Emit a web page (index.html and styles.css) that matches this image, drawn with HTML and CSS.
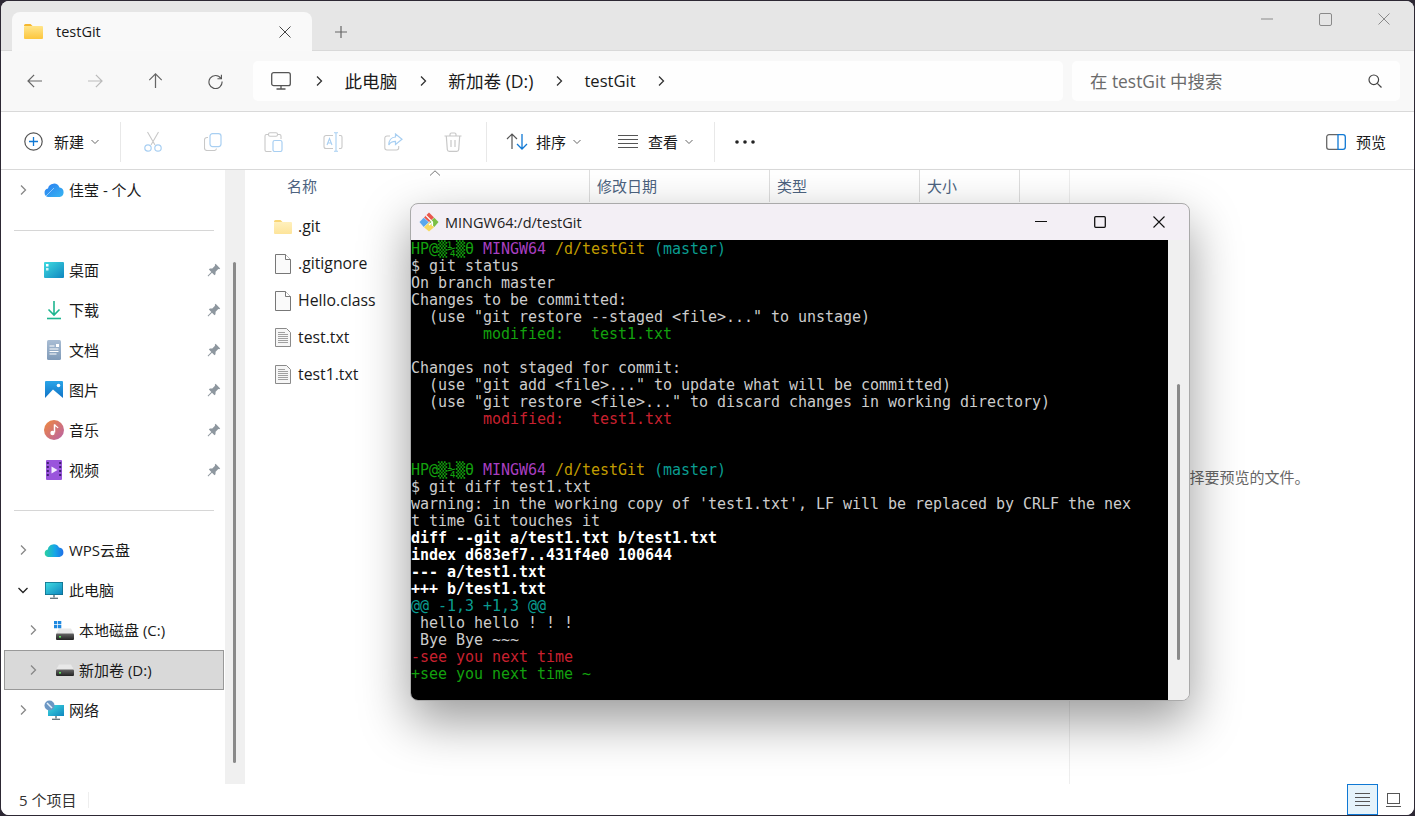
FILE: index.html
```html
<!DOCTYPE html>
<html lang="zh-CN">
<head>
    <meta charset="UTF-8">
    <meta name="viewport" content="width=device-width, initial-scale=1.0">
    <title>testGit</title>
    <link rel="stylesheet" href="styles.css">
</head>
<body>
    <!-- Shared icons -->
    <svg class="sprite" aria-hidden="true">
        <defs>
            <linearGradient id="gFolder" x1="0" y1="0" x2="0" y2="1"><stop offset="0" stop-color="#ffe58a"/><stop offset="1" stop-color="#fcc63d"/></linearGradient>
            <linearGradient id="gFolderPale" x1="0" y1="0" x2="0" y2="1"><stop offset="0" stop-color="#fff0bd"/><stop offset="1" stop-color="#fde49a"/></linearGradient>
            <linearGradient id="gCloud" x1="0" y1="0" x2="1" y2="1"><stop offset="0" stop-color="#2a7df0"/><stop offset="1" stop-color="#38b6f2"/></linearGradient>
            <linearGradient id="gWps" x1="0" y1="0" x2="1" y2="0"><stop offset="0" stop-color="#2ad0a0"/><stop offset="0.55" stop-color="#16a6e8"/><stop offset="1" stop-color="#1f6fe8"/></linearGradient>
            <linearGradient id="gScreen" x1="0" y1="0" x2="1" y2="1"><stop offset="0" stop-color="#3fdbe0"/><stop offset="1" stop-color="#0f86c0"/></linearGradient>
            <linearGradient id="gDoc" x1="0" y1="0" x2="0" y2="1"><stop offset="0" stop-color="#a9bdd4"/><stop offset="1" stop-color="#7f9ab8"/></linearGradient>
            <linearGradient id="gPic" x1="0" y1="0" x2="0" y2="1"><stop offset="0" stop-color="#2aa5e8"/><stop offset="1" stop-color="#0f70c4"/></linearGradient>
            <linearGradient id="gMusic" x1="0" y1="0" x2="1" y2="1"><stop offset="0" stop-color="#f08a3c"/><stop offset="1" stop-color="#b860a8"/></linearGradient>
            <linearGradient id="gDrive" x1="0" y1="0" x2="0" y2="1"><stop offset="0" stop-color="#666"/><stop offset="1" stop-color="#222"/></linearGradient>

            <symbol id="i-chev" viewBox="0 0 12 12"><path d="M4 1.500 8.500 6 4 10.500" fill="none" stroke="currentColor" stroke-width="1.300"/></symbol>
            <symbol id="i-down" viewBox="0 0 12 12"><path d="M2.500 4 6 7.500 9.500 4" fill="none" stroke="currentColor" stroke-width="1"/></symbol>
            <symbol id="i-pin" viewBox="0 0 14 14"><path d="M8.600.8 13.200 5.400l-1 .9-.9-.2-2.700 2.700-.1 2.400-1 1-2.500-2.500L1.200 13.400l-.6-.6 3.700-3.800L1.900 6.500l1-1 2.400-.1L8 2.700l-.2-.9z" fill="#8e979f"/></symbol>
            <symbol id="i-file" viewBox="0 0 18 20"><path d="M1.500.5h10l5 5v14h-15z" fill="#fafafa" stroke="#777"/><path d="M11.500.5v5h5" fill="#fff" stroke="#777"/></symbol>
            <symbol id="i-txt" viewBox="0 0 16 19"><path d="M.5.5h11l4 4v14H.500z" fill="#f6f6f6" stroke="#8a8a8a"/><path d="M3 4.500h7M3 6.500h10M3 8.500h10M3 10.500h10M3 12.500h10M3 14.500h10" stroke="#a0a0a0"/></symbol>
            <symbol id="i-drive" viewBox="0 0 18 12"><path d="M3 .5h12l3 5.500H0z" fill="#e8e8e8"/><rect y="5.500" width="18" height="6.500" rx="1" fill="url(#gDrive)"/><rect x="3" y="8" width="2" height="1.600" fill="#5de05d"/></symbol>
        </defs>
    </svg>

    <div class="explorer">
        <!-- Tabs -->
        <div class="tabbar">
            <div class="tab">
                <svg class="tab-folder" width="19" height="15" viewBox="0 0 19 15"><path d="M0 1.500A1.500 1.500 0 0 1 1.500 0h5l2 2H0z" fill="#f5b72f"/><rect y="2" width="19" height="13" rx="1" fill="url(#gFolder)"/></svg>
                <span class="tab-title">testGit</span>
                <svg class="tab-close" width="12" height="12" viewBox="0 0 12 12"><path d="M.5.5l11 11M11.500.5l-11 11" stroke="#444" fill="none"/></svg>
            </div>
            <svg class="tab-add" width="12" height="12" viewBox="0 0 12 12"><path d="M6 0v12M0 6h12" stroke="#666" stroke-width="1.200"/></svg>
            <div class="win-controls">
                <svg width="12" height="12" viewBox="0 0 12 12"><path d="M0 6h12" stroke="#8a8a8a"/></svg>
                <svg width="13" height="13" viewBox="0 0 13 13"><rect x=".5" y=".5" width="12" height="12" rx="1.500" fill="none" stroke="#8a8a8a"/></svg>
                <svg width="12" height="12" viewBox="0 0 12 12"><path d="M.5.5l11 11M11.500.5l-11 11" stroke="#8a8a8a" fill="none"/></svg>
            </div>
        </div>

        <!-- Address row -->
        <div class="navbar">
            <button class="nav-btn"><svg width="16" height="14" viewBox="0 0 18 16"><path d="M8 1 1 8l7 7M1 8h16" fill="none" stroke="#666" stroke-width="1.400"/></svg></button>
            <button class="nav-btn"><svg width="16" height="14" viewBox="0 0 18 16"><path d="M10 1l7 7-7 7M17 8H1" fill="none" stroke="#bbb" stroke-width="1.400"/></svg></button>
            <button class="nav-btn"><svg width="15" height="16" viewBox="0 0 16 18"><path d="M1 8l7-7 7 7M8 1v16" fill="none" stroke="#666" stroke-width="1.400"/></svg></button>
            <button class="nav-btn"><svg width="15" height="15" viewBox="0 0 16 16"><path d="M13.800 4.600A7 7 0 1 0 15 8" fill="none" stroke="#555" stroke-width="1.200"/><path d="M14.300.8v4.200h-4.200" fill="none" stroke="#555" stroke-width="1.200"/></svg></button>
            <div class="address">
                <svg class="addr-pc" width="20" height="18" viewBox="0 0 20 18"><rect x=".7" y=".7" width="18.600" height="13" rx="2" fill="none" stroke="#555" stroke-width="1.300"/><path d="M10 14v3M5.500 17h9" stroke="#555" stroke-width="1.300"/></svg>
                <svg class="crumb-chev" width="12" height="12"><use href="#i-chev"/></svg>
                <span class="crumb">此电脑</span>
                <svg class="crumb-chev" width="12" height="12"><use href="#i-chev"/></svg>
                <span class="crumb">新加卷 (D:)</span>
                <svg class="crumb-chev" width="12" height="12"><use href="#i-chev"/></svg>
                <span class="crumb crumb-last">testGit</span>
                <svg class="crumb-chev" width="12" height="12"><use href="#i-chev"/></svg>
            </div>
            <div class="search">
                <span class="search-text">在 testGit 中搜索</span>
                <svg width="14" height="14" viewBox="0 0 14 14"><circle cx="5.800" cy="5.800" r="4.800" fill="none" stroke="#444" stroke-width="1.200"/><path d="M9.300 9.300 13.500 13.500" stroke="#444" stroke-width="1.200"/></svg>
            </div>
        </div>

        <!-- Command bar -->
        <div class="toolbar">
            <div class="tool tool-new">
                <svg width="19" height="19" viewBox="0 0 19 19"><circle cx="9.500" cy="9.500" r="8.700" fill="none" stroke="#555" stroke-width="1.200"/><path d="M9.500 5v9M5 9.500h9" stroke="#0f78d4" stroke-width="1.300"/></svg>
                <span class="tool-label">新建</span>
                <svg class="tool-chev" width="12" height="12"><use href="#i-down"/></svg>
            </div>
            <div class="tool-sep"></div>
            <div class="tool-group">
                <div class="tool-icon"><svg width="18" height="21" viewBox="0 0 18 21"><path d="M3.500 1l7.500 13M14.500 1L7 14" stroke="#c8c8c8" fill="none" stroke-width="1.100"/><circle cx="4" cy="17" r="3.200" fill="none" stroke="#a8cff2" stroke-width="1.200"/><circle cx="14" cy="17" r="3.200" fill="none" stroke="#a8cff2" stroke-width="1.200"/></svg></div>
                <div class="tool-icon"><svg width="18" height="18" viewBox="0 0 18 18"><path d="M4 4.500H3a2.500 2.500 0 0 0-2.500 2.500v8A2.500 2.500 0 0 0 3 17.500h7a2.500 2.500 0 0 0 2.500-2" fill="none" stroke="#c8c8c8" stroke-width="1.100"/><rect x="6" y=".6" width="11" height="13" rx="2.500" fill="none" stroke="#a8cff2" stroke-width="1.200"/></svg></div>
                <div class="tool-icon"><svg width="19" height="20" viewBox="0 0 19 20"><path d="M4 2.500H2.500A1.500 1.500 0 0 0 1 4v14a1.500 1.500 0 0 0 1.500 1.500h5M14 2.500h1.500A1.500 1.500 0 0 1 17 4v3" fill="none" stroke="#c8c8c8" stroke-width="1.100"/><rect x="4.500" y=".8" width="9" height="3.500" rx="1.500" fill="none" stroke="#c8c8c8" stroke-width="1.100"/><rect x="9" y="8.500" width="9" height="11" rx="1.800" fill="none" stroke="#a8cff2" stroke-width="1.200"/></svg></div>
                <div class="tool-icon"><svg width="20" height="20" viewBox="0 0 20 20"><path d="M10 3.500H3A2 2 0 0 0 1 5.500v9a2 2 0 0 0 2 2h7M16 3.500h1.500a1.500 1.500 0 0 1 1.500 1.500v10a1.500 1.500 0 0 1-1.500 1.500H16" fill="none" stroke="#c8c8c8" stroke-width="1.100"/><path d="M11 .7h4M11 19.300h4M13 .7v18.600M4 13l2.500-6.500L9 13M5 11h3" fill="none" stroke="#a8cff2" stroke-width="1.100"/></svg></div>
                <div class="tool-icon"><svg width="19" height="18" viewBox="0 0 19 18"><path d="M6 3H3A2.200 2.200 0 0 0 .8 5.200v9.600A2.200 2.200 0 0 0 3 17h9.500a2.200 2.200 0 0 0 2.200-2.200V13" fill="none" stroke="#c8c8c8" stroke-width="1.100"/><path d="M11.500 1l6.500 5.200-6.500 5.300V8.400C8 8.400 6 9.700 4.800 12c0-4.500 2.500-7.800 6.700-8z" fill="none" stroke="#a8cff2" stroke-width="1.200"/></svg></div>
                <div class="tool-icon"><svg width="18" height="20" viewBox="0 0 18 20"><path d="M.5 4h17M6 3.800V2.500A1.500 1.500 0 0 1 7.500 1h3A1.500 1.500 0 0 1 12 2.500v1.300M2.300 4l1 13.500A2 2 0 0 0 5.300 19.300h7.400a2 2 0 0 0 2-1.800l1-13.500M7 8v7M11 8v7" fill="none" stroke="#c8c8c8" stroke-width="1.200"/></svg></div>
            </div>
            <div class="tool-sep"></div>
            <div class="tool tool-sort">
                <svg width="22" height="17" viewBox="0 0 22 17"><path d="M1 6l5-5 5 5M6 1v15" fill="none" stroke="#555" stroke-width="1.200"/><path d="M11 11l5 5 5-5M16 16V1" fill="none" stroke="#0f78d4" stroke-width="1.300"/></svg>
                <span class="tool-label">排序</span>
                <svg class="tool-chev" width="12" height="12"><use href="#i-down"/></svg>
            </div>
            <div class="tool tool-view">
                <svg width="20" height="14" viewBox="0 0 20 14"><path d="M0 .5h20M0 4.500h20M0 8.500h20M0 12.500h20" stroke="#555"/></svg>
                <span class="tool-label">查看</span>
                <svg class="tool-chev" width="12" height="12"><use href="#i-down"/></svg>
            </div>
            <div class="tool-sep"></div>
            <svg class="tool-more" width="20" height="4" viewBox="0 0 20 4"><circle cx="2" cy="2" r="1.800" fill="#222"/><circle cx="10" cy="2" r="1.800" fill="#222"/><circle cx="18" cy="2" r="1.800" fill="#222"/></svg>
            <div class="tool tool-preview">
                <svg width="20" height="16" viewBox="0 0 20 16"><path d="M12 .7H3A2.300 2.300 0 0 0 .7 3v10A2.300 2.300 0 0 0 3 15.300h9" fill="none" stroke="#666" stroke-width="1.300"/><path d="M12 .7h5A2.300 2.300 0 0 1 19.300 3v10a2.300 2.300 0 0 1-2.300 2.300h-5zM12 .7v14.600" fill="none" stroke="#0f78d4" stroke-width="1.300"/></svg>
                <span class="tool-label">预览</span>
            </div>
        </div>

        <!-- Main area -->
        <div class="main">
            <nav class="sidebar">
                <div class="nav-row">
                    <svg class="nav-chev" width="12" height="12"><use href="#i-chev"/></svg>
                    <svg class="nav-icon" width="20" height="14" viewBox="0 0 20 14"><path d="M4.500 14A4.300 4.300 0 0 1 4 5.500 6 6 0 0 1 15.500 4.500 4.800 4.800 0 0 1 15.500 14z" fill="url(#gCloud)"/><path d="M2 13 10 5" stroke="#8fc8ff" stroke-width="1"/></svg>
                    <span class="nav-label">佳莹 - 个人</span>
                </div>
                <div class="nav-divider"></div>
                <div class="nav-row">
                    <span class="nav-chev"></span>
                    <svg class="nav-icon" width="20" height="16" viewBox="0 0 20 16"><rect width="20" height="16" rx="1" fill="url(#gScreen)"/><rect x="2" y="2" width="2.500" height="2.500" fill="#fff"/><rect x="2" y="6" width="2.500" height="2.500" fill="#cff5f8"/></svg>
                    <span class="nav-label">桌面</span>
                    <svg class="nav-pin" width="14" height="14"><use href="#i-pin"/></svg>
                </div>
                <div class="nav-row">
                    <span class="nav-chev"></span>
                    <svg class="nav-icon" width="20" height="20" viewBox="0 0 20 20"><path d="M10 1v14M4.500 9.500 10 15l5.500-5.500" fill="none" stroke="#1eb58f" stroke-width="1.600"/><path d="M3 18.500h14" stroke="#1eb58f" stroke-width="1.600"/></svg>
                    <span class="nav-label">下载</span>
                    <svg class="nav-pin" width="14" height="14"><use href="#i-pin"/></svg>
                </div>
                <div class="nav-row">
                    <span class="nav-chev"></span>
                    <svg class="nav-icon" width="20" height="20" viewBox="0 0 20 20"><rect x="3" width="14" height="20" rx="1.500" fill="url(#gDoc)"/><path d="M5.500 6h5M5.500 9h9M5.500 11.500h9M5.500 14h7" stroke="#fff"/><rect x="12" y="4" width="3" height="3" fill="#fff"/></svg>
                    <span class="nav-label">文档</span>
                    <svg class="nav-pin" width="14" height="14"><use href="#i-pin"/></svg>
                </div>
                <div class="nav-row">
                    <span class="nav-chev"></span>
                    <svg class="nav-icon" width="20" height="18" viewBox="0 0 20 18"><rect x="1" width="18" height="18" rx="1" fill="url(#gPic)"/><circle cx="14.500" cy="4.500" r="1.800" fill="#fff"/><path d="M1 17 9 8.500 19 17v1H1z" fill="#fff"/></svg>
                    <span class="nav-label">图片</span>
                    <svg class="nav-pin" width="14" height="14"><use href="#i-pin"/></svg>
                </div>
                <div class="nav-row">
                    <span class="nav-chev"></span>
                    <svg class="nav-icon" width="20" height="20" viewBox="0 0 20 20"><circle cx="10" cy="10" r="10" fill="url(#gMusic)"/><path d="M10.500 4.500v8" stroke="#fff" stroke-width="1.500"/><path d="M10.500 4.500c.5 2 3 2 3.500 3.500" fill="none" stroke="#fff" stroke-width="1.300"/><circle cx="8.500" cy="13" r="2.200" fill="#fff"/></svg>
                    <span class="nav-label">音乐</span>
                    <svg class="nav-pin" width="14" height="14"><use href="#i-pin"/></svg>
                </div>
                <div class="nav-row">
                    <span class="nav-chev"></span>
                    <svg class="nav-icon" width="20" height="20" viewBox="0 0 20 20"><rect x="2" width="16" height="20" rx="1" fill="#9a55dc"/><path d="M3.800 2v16M16.200 2v16" stroke="#3d2070" stroke-width="2" stroke-dasharray="2 2"/><path d="M7.500 6.500v7l6-3.500z" fill="#f4ecff"/></svg>
                    <span class="nav-label">视频</span>
                    <svg class="nav-pin" width="14" height="14"><use href="#i-pin"/></svg>
                </div>
                <div class="nav-divider"></div>
                <div class="nav-row">
                    <svg class="nav-chev" width="12" height="12"><use href="#i-chev"/></svg>
                    <svg class="nav-icon" width="20" height="14" viewBox="0 0 20 14"><path d="M4 14A3.800 3.800 0 0 1 3.800 6.500 6 6 0 0 1 15 4.500 4.800 4.800 0 0 1 15.500 14z" fill="url(#gWps)"/></svg>
                    <span class="nav-label">WPS云盘</span>
                </div>
                <div class="nav-row">
                    <svg class="nav-chev nav-chev-open" width="12" height="12" viewBox="0 0 12 12"><path d="M1.500 4 6 8.500 10.500 4" fill="none" stroke="#222" stroke-width="1.300"/></svg>
                    <svg class="nav-icon" width="20" height="17" viewBox="0 0 20 17"><rect x="1" width="18" height="13" fill="#0f6f8c"/><rect x="1.800" y=".8" width="16.400" height="11.400" fill="url(#gScreen)"/><path d="M10 13v2.500" stroke="#8a9aa0" stroke-width="2"/><path d="M6 16.300h8" stroke="#607078" stroke-width="1.300"/></svg>
                    <span class="nav-label">此电脑</span>
                </div>
                <div class="nav-row nav-row-sub">
                    <svg class="nav-chev" width="12" height="12"><use href="#i-chev"/></svg>
                    <svg class="nav-icon" width="20" height="19" viewBox="0 0 20 19"><svg x="2" y="7" width="18" height="12" viewBox="0 0 18 12"><use href="#i-drive"/></svg><path d="M0 0h3.300v3.300H0zM4 0h3.300v3.300H4zM0 4h3.300v3.300H0zM4 4h3.300v3.300H4z" fill="#1e88e0"/></svg>
                    <span class="nav-label">本地磁盘 (C:)</span>
                </div>
                <div class="nav-row nav-row-sub nav-row-active">
                    <svg class="nav-chev" width="12" height="12"><use href="#i-chev"/></svg>
                    <svg class="nav-icon" width="20" height="12" viewBox="0 0 20 12"><svg x="2" width="18" height="12" viewBox="0 0 18 12"><use href="#i-drive"/></svg></svg>
                    <span class="nav-label">新加卷 (D:)</span>
                </div>
                <div class="nav-row">
                    <svg class="nav-chev" width="12" height="12"><use href="#i-chev"/></svg>
                    <svg class="nav-icon" width="20" height="20" viewBox="0 0 20 20"><rect x="4" y="5" width="16" height="11" fill="url(#gScreen)"/><path d="M12 16v2.500" stroke="#8a9aa0" stroke-width="2"/><path d="M8 19.300h8" stroke="#607078" stroke-width="1.300"/><circle cx="5.500" cy="5.500" r="5" fill="#6b97c4"/><path d="M3 3l5 5" stroke="#e6f0fa" stroke-width="1.500"/></svg>
                    <span class="nav-label">网络</span>
                </div>
            </nav>
            <div class="side-scroll"><div class="side-thumb"></div></div>

            <section class="files">
                <div class="file-head">
                    <div class="col col-name">名称<svg class="sort-mark" width="12" height="6" viewBox="0 0 12 6"><path d="M1 5.500 6 .8l5 4.700" fill="none" stroke="#777"/></svg></div>
                    <div class="col col-date">修改日期</div>
                    <div class="col col-type">类型</div>
                    <div class="col col-size">大小</div>
                </div>
                <div class="file-row">
                    <svg class="file-icon" width="18" height="14" viewBox="0 0 18 14"><path d="M0 1.500A1.500 1.500 0 0 1 1.500 0h5l2 2H0z" fill="#f9d675"/><rect y="2" width="18" height="12" rx="1" fill="url(#gFolderPale)"/></svg>
                    <span>.git</span>
                </div>
                <div class="file-row">
                    <svg class="file-icon" width="18" height="20"><use href="#i-file"/></svg>
                    <span>.gitignore</span>
                </div>
                <div class="file-row">
                    <svg class="file-icon" width="18" height="20"><use href="#i-file"/></svg>
                    <span>Hello.class</span>
                </div>
                <div class="file-row">
                    <svg class="file-icon" width="18" height="19"><use href="#i-txt"/></svg>
                    <span>test.txt</span>
                </div>
                <div class="file-row">
                    <svg class="file-icon" width="18" height="19"><use href="#i-txt"/></svg>
                    <span>test1.txt</span>
                </div>
            </section>

            <aside class="preview">选择要预览的文件。</aside>
        </div>

        <!-- Status bar -->
        <div class="statusbar">
            <span class="status-count">5 个项目</span>
            <div class="status-sep"></div>
            <div class="view-btn view-btn-on"><svg width="15" height="14" viewBox="0 0 15 14"><path d="M0 .5h15M0 4.500h15M0 8.500h15M0 12.500h15" stroke="#555"/></svg></div>
            <div class="view-btn"><svg width="15" height="14" viewBox="0 0 15 14"><rect x="1.500" y=".5" width="12" height="10" fill="none" stroke="#555"/><path d="M0 13.500h15" stroke="#555"/></svg></div>
        </div>
    </div>

    <!-- Git Bash window, floating over the explorer -->
    <div class="terminal">
        <div class="term-title">
            <svg class="term-logo" width="20" height="20" viewBox="0 0 20 20">
                <path d="M10 .5 15 5.500 10 10 5 5.500z" fill="#e8574c"/>
                <path d="M4.700 5.800 9.700 10.300 4.700 15 .5 10z" fill="#5aa8ee"/>
                <path d="M15.300 5.800 19.500 10 15.300 15 10.300 10.300z" fill="#7bc043"/>
                <path d="M10 10.600 15 15.300 10 19.500 5 15.300z" fill="#f6d95e"/>
                <path d="M7 3.500 13.500 10v4M13.500 10 10 13" stroke="#fff" stroke-width="1.200" fill="none"/>
            </svg>
            <span class="term-name">MINGW64:/d/testGit</span>
            <div class="term-controls">
                <svg width="12" height="12" viewBox="0 0 12 12"><path d="M0 5.500h12" stroke="#111"/></svg>
                <svg width="12" height="12" viewBox="0 0 12 12"><rect x=".7" y=".7" width="10.600" height="10.600" rx="1" fill="none" stroke="#111" stroke-width="1.300"/></svg>
                <svg width="12" height="12" viewBox="0 0 12 12"><path d="M.5.500l11 11M11.500.500l-11 11" stroke="#111" stroke-width="1.100" fill="none"/></svg>
            </div>
        </div>
        <div class="term-body">
<pre class="term-text"><span class="c-green">HP@▒¼▒θ</span> <span class="c-purple">MINGW64</span> <span class="c-yellow">/d/testGit</span> <span class="c-teal">(master)</span>
$ git status
On branch master
Changes to be committed:
  (use "git restore --staged &lt;file&gt;..." to unstage)
<span class="c-green">        modified:   test1.txt</span>

Changes not staged for commit:
  (use "git add &lt;file&gt;..." to update what will be committed)
  (use "git restore &lt;file&gt;..." to discard changes in working directory)
<span class="c-red">        modified:   test1.txt</span>


<span class="c-green">HP@▒¼▒θ</span> <span class="c-purple">MINGW64</span> <span class="c-yellow">/d/testGit</span> <span class="c-teal">(master)</span>
$ git diff test1.txt
warning: in the working copy of 'test1.txt', LF will be replaced by CRLF the nex
t time Git touches it
<b>diff --git a/test1.txt b/test1.txt</b>
<b>index d683ef7..431f4e0 100644</b>
<b>--- a/test1.txt</b>
<b>+++ b/test1.txt</b>
<span class="c-teal">@@ -1,3 +1,3 @@</span>
 hello hello ! ! !
 Bye Bye ~~~
<span class="c-red">-see you next time</span>
<span class="c-green">+see you next time ~</span></pre>
            <div class="term-scroll"><div class="term-thumb"></div></div>
        </div>
    </div>
</body>
</html>
```

FILE: styles.css
```css
* {
    margin: 0;
    padding: 0;
    box-sizing: border-box;
}

body {
    position: relative;
    width: 1415px;
    height: 816px;
    background: #2d2834;
    font-family: "Open Sans", "Noto Sans CJK SC", sans-serif;
    font-size: 15px;
    color: #1a1a1a;
    overflow: hidden;
}

svg {
    display: block;
    flex: none;
}

.sprite {
    width: 0;
    height: 0;
}

.explorer {
    display: flex;
    flex-direction: column;
    width: 1413px;
    height: 814px;
    margin: 1px;
    background: #fff;
    border-radius: 8px;
    overflow: hidden;
}

/* Tab row */
.tabbar {
    display: flex;
    align-items: flex-start;
    height: 50px;
    padding: 11px 0 0 11px;
    background: #e6e6e6;
    border-bottom: 1px solid #d9d9d9;
    flex: none;
}

.tab {
    display: flex;
    align-items: center;
    width: 300px;
    height: 39px;
    padding: 0 21px 0 12px;
    background: #f9f9f9;
    border-radius: 8px 8px 0 0;
}

.tab-title {
    margin-left: 13px;
    font-size: 14.5px;
}

.tab-close {
    margin-left: auto;
}

.tab-add {
    margin: 14px 0 0 23px;
}

.win-controls {
    display: flex;
    gap: 46px;
    margin: 1px 24px 0 auto;
}

/* Address row */
.navbar {
    display: flex;
    align-items: center;
    height: 61px;
    padding-left: 4px;
    background: #f8f8f8;
    border-bottom: 1px solid #d9d9d9;
    flex: none;
}

.nav-btn {
    display: flex;
    align-items: center;
    justify-content: center;
    width: 60px;
    height: 40px;
    background: none;
    border: none;
}

.address {
    display: flex;
    align-items: center;
    width: 810px;
    height: 40px;
    margin-left: 8px;
    padding-left: 18px;
    background: #fefefe;
    border-radius: 5px;
    font-size: 17.6px;
}

.addr-pc {
    margin-right: 22px;
}

.crumb {
    margin: 0 19.5px;
}

.crumb-last {
    font-size: 16.6px;
}

.crumb-chev {
    color: #333;
}

.search {
    display: flex;
    align-items: center;
    justify-content: space-between;
    width: 328px;
    height: 40px;
    margin-left: 9px;
    padding: 0 18px;
    background: #fefefe;
    border-radius: 5px;
    font-size: 17.4px;
    color: #6b6b6b;
}

.crumb,
.search-text {
    padding-bottom: 1px;
}

/* Command bar */
.toolbar {
    display: flex;
    align-items: center;
    height: 58px;
    padding: 2px 0 0 23px;
    background: #fff;
    border-bottom: 1px solid #d9d9d9;
    flex: none;
}

.tool {
    display: flex;
    align-items: center;
    font-size: 15px;
}

.tool-new {
    width: 96px;
}

.tool-new .tool-label {
    margin-left: 11px;
}

.tool-chev {
    margin-left: 5px;
    color: #666;
}

.tool-sep {
    width: 1px;
    height: 40px;
    background: #e8e8e8;
}

.tool-group {
    display: flex;
    margin: 0 3px 0 2px;
}

.tool-icon {
    display: flex;
    align-items: center;
    justify-content: center;
    width: 60px;
}

.tool-sort {
    margin-left: 19px;
}

.tool-sort .tool-label {
    margin-left: 8px;
}

.tool-view {
    margin: 0 19px 0 35px;
}

.tool-view .tool-label {
    margin-left: 10px;
}

.tool-more {
    margin-left: 20px;
}

.tool-preview {
    margin: 0 28px 0 auto;
}

.tool-preview .tool-label {
    margin-left: 10px;
}

/* Main area */
.main {
    display: flex;
    flex: 1;
    min-height: 0;
}

.sidebar {
    width: 224px;
    padding: 0 0 0 3px;
    flex: none;
}

.nav-row {
    display: flex;
    align-items: center;
    width: 220px;
    height: 40px;
    padding: 0 2px 0 12px;
    border: 1px solid transparent;
    font-size: 15px;
}

.nav-label {
    padding-bottom: 2px;
}

.nav-row-sub {
    padding-left: 22px;
}

.nav-row-active {
    background: #d9d9d9;
    border-color: #999;
}

.nav-chev {
    width: 12px;
    height: 12px;
    margin-right: 15px;
    color: #888;
    flex: none;
}

.nav-icon {
    margin-right: 5px;
}

.nav-pin {
    margin-left: auto;
}

.nav-divider {
    width: 200px;
    height: 40px;
    margin-left: 10px;
    background: linear-gradient(#d6d6d6, #d6d6d6) center / 100% 1px no-repeat;
}

.side-scroll {
    width: 20px;
    padding: 92px 0 21px 8px;
    background: #f0f0f0;
    flex: none;
}

.side-thumb {
    width: 3px;
    height: 501px;
    background: #8a8a8a;
    border-radius: 2px;
}

/* File list */
.files {
    width: 825px;
    background: #fff;
    border-right: 1px solid #eee;
    flex: none;
}

.file-head {
    display: flex;
    height: 32px;
    margin-bottom: 6px;
    color: #4d6380;
    font-size: 15px;
}

.col {
    display: flex;
    align-items: center;
    padding: 0 0 2px 7px;
    border-right: 1px solid #dedede;
}

.col-name {
    position: relative;
    width: 345px;
    padding-left: 42px;
}

.sort-mark {
    position: absolute;
    left: 184px;
    top: 0;
}

.col-date {
    width: 180px;
}

.col-type {
    width: 150px;
}

.col-size {
    width: 100px;
}

.file-row {
    display: flex;
    align-items: center;
    height: 37px;
    padding-left: 29px;
    font-size: 15.8px;
}

.file-icon {
    width: 18px;
    margin-right: 6px;
}

.file-row span {
    padding-bottom: 2px;
}

.preview {
    display: flex;
    align-items: center;
    justify-content: center;
    flex: 1;
    padding-bottom: 2px;
    color: #666;
    font-size: 15px;
}

/* Status bar */
.statusbar {
    display: flex;
    align-items: center;
    height: 31px;
    padding-left: 18px;
    background: #fff;
    flex: none;
    font-size: 15px;
    color: #333;
}

.status-count {
    width: 69px;
}

.status-sep {
    width: 1px;
    height: 16px;
    background: #eee;
}

.view-btn {
    display: flex;
    align-items: center;
    justify-content: center;
    width: 31px;
    height: 31px;
    border: 1px solid transparent;
}

.view-btn-on {
    margin-left: auto;
    background: #e5f3fb;
    border-color: #0f78d4;
}

.statusbar .view-btn:last-child {
    margin: 0 5px 0 0;
}

/* Terminal window */
.terminal {
    position: absolute;
    left: 410px;
    top: 203px;
    width: 780px;
    height: 498px;
    background: #f3eff5;
    border: 1px solid #aaa;
    border-radius: 8px;
    box-shadow: 0 20px 50px rgba(0, 0, 0, 0.4);
    overflow: hidden;
}

.term-title {
    display: flex;
    align-items: center;
    height: 36px;
    padding-left: 8px;
    font-size: 14.5px;
    color: #222;
}

.term-name {
    margin-left: 6px;
}

.term-controls {
    display: flex;
    gap: 47px;
    margin: 0 24px 0 auto;
}

.term-body {
    display: flex;
    height: 460px;
}

.term-text {
    width: 757px;
    height: 100%;
    padding-top: 1px;
    background: #000;
    color: #ccc;
    font-family: "DejaVu Sans Mono", "Liberation Mono", monospace;
    font-size: 15px;
    letter-spacing: -0.03px;
    line-height: 17px;
}

.term-text b {
    color: #fff;
}

.c-green { color: #13a10e; }
.c-purple { color: #a83fc0; }
.c-yellow { color: #c19c00; }
.c-teal { color: #0a9c90; }
.c-red { color: #c8202f; }

.term-scroll {
    flex: 1;
    padding: 144px 0 0 9px;
    background: #f0f0f0;
}

.term-thumb {
    width: 3px;
    height: 276px;
    background: #8a8a8a;
    border-radius: 2px;
}
```
